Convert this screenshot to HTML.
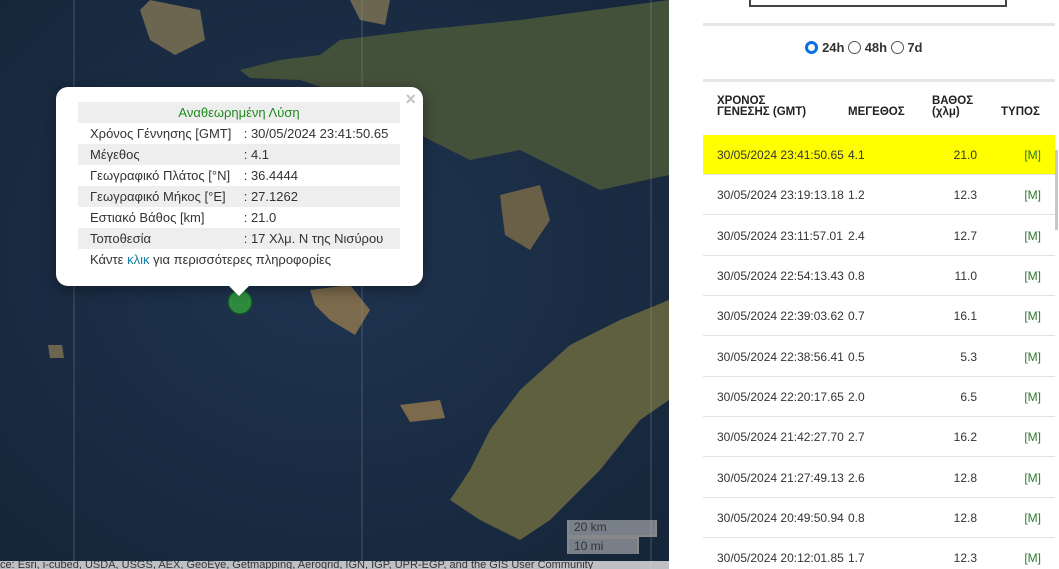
<!DOCTYPE html>
<html><head><meta charset="utf-8"><style>
*{margin:0;padding:0;box-sizing:border-box}
html,body{width:1059px;height:569px;overflow:hidden}
body{background:#fff;font-family:"Liberation Sans","DejaVu Sans",sans-serif;position:relative}
#map{position:absolute;left:0;top:0;width:669px;height:569px;background:#1b2c40;overflow:hidden}
.popup{position:absolute;left:56px;top:87px;width:367px;height:199px;background:#fff;border-radius:12px;box-shadow:0 3px 14px rgba(0,0,0,.4)}
.popup:after{content:"";position:absolute;left:173px;bottom:-10px;border:10px solid transparent;border-top-color:#fff;border-bottom:0}
.popup table{position:absolute;left:22px;top:15px;width:322px;border-collapse:collapse;font-size:13px;color:#333}
.popup td{height:21px;padding:0 0 0 12px;white-space:nowrap}
.popup td+td{padding-left:0}
.popup tr:nth-child(odd) td{background:#eee}
.x{position:absolute;right:7px;top:2px;color:#c3c3c3;font-size:18px;font-weight:bold}
#panel{position:absolute;left:669px;top:0;width:390px;height:569px;overflow:hidden}
.hr{position:absolute;left:34px;width:352px;height:3px;background:#e6e6e6}
.rows div{position:absolute;left:34px;width:352px;height:40px;border-bottom:1px solid #e2e2e2;font-size:12px;color:#333}
.rows span{position:absolute;top:13px}
.g{color:#2b7a2b}
</style></head><body>
<div id="map">
<svg width="669" height="569" style="position:absolute;left:0;top:0">
<defs><radialGradient id="s" cx="50%" cy="45%" r="70%"><stop offset="0" stop-color="#1f3450"/><stop offset="1" stop-color="#16263a"/></radialGradient></defs>
<rect width="669" height="569" fill="url(#s)"/>
<g fill="#44513a">
<path d="M340 40 L420 30 L520 20 L669 0 L669 175 L600 190 L560 170 L520 150 L470 160 L430 140 L395 120 L360 105 L330 90 L300 80 L250 78 L240 70 L280 60 L320 55Z"/>
<path d="M669 300 L620 320 L570 345 L520 390 L490 430 L470 470 L450 500 L480 520 L520 540 L550 520 L600 470 L640 420 L669 400Z" fill="#5e6040"/>
<path d="M150 0 L200 10 L205 40 L175 55 L150 40 L140 10Z" fill="#6c6650"/>
<path d="M350 0 L390 0 L385 25 L360 20Z" fill="#6c6650"/>
<path d="M500 195 L540 185 L550 220 L530 250 L505 235Z" fill="#6a6048"/>
<path d="M310 290 L350 285 L370 310 L355 335 L330 320 L315 305Z" fill="#7c6a4c"/>
<path d="M400 405 L440 400 L445 418 L410 422Z" fill="#7c6a4c"/>
<path d="M48 345 L62 345 L64 358 L50 358Z" fill="#6c6650"/>
</g>
<line x1="74" y1="0" x2="74" y2="569" stroke="#9aa3ad" stroke-opacity=".35"/>
<line x1="362" y1="0" x2="362" y2="569" stroke="#9aa3ad" stroke-opacity=".35"/>
<line x1="651" y1="0" x2="651" y2="569" stroke="#9aa3ad" stroke-opacity=".35"/>
<circle cx="240" cy="302" r="12" fill="#2e8b3e" stroke="#16502a" stroke-width="1.5"/>
</svg>
<div style="position:absolute;left:567px;top:520px;width:90px;height:17px;background:rgba(200,200,200,.55);border:2px solid #888;border-top:0;font-size:12px;color:#333;padding-left:5px">20 km</div>
<div style="position:absolute;left:567px;top:537px;width:72px;height:17px;background:rgba(200,200,200,.55);border:2px solid #888;border-bottom:0;font-size:12px;color:#333;padding-left:5px">10 mi</div>
<div style="position:absolute;left:0;top:561px;width:669px;height:8px;background:rgba(220,220,220,.85);font-size:11px;line-height:8px;color:#333;white-space:nowrap;overflow:hidden">ce: Esri, i-cubed, USDA, USGS, AEX, GeoEye, Getmapping, Aerogrid, IGN, IGP, UPR-EGP, and the GIS User Community</div>
<div class="popup"><span class="x">×</span>
<table>
<tr><td colspan="2" style="text-align:center;color:#1f8a1f;padding:0">Αναθεωρημένη Λύση</td></tr>
<tr><td style="background:#fff">Χρόνος Γέννησης [GMT]</td><td style="background:#fff">: 30/05/2024 23:41:50.65</td></tr>
<tr><td>Μέγεθος</td><td>: 4.1</td></tr>
<tr><td style="background:#fff">Γεωγραφικό Πλάτος [°N]</td><td style="background:#fff">: 36.4444</td></tr>
<tr><td>Γεωγραφικό Μήκος [°E]</td><td>: 27.1262</td></tr>
<tr><td style="background:#fff">Εστιακό Βάθος [km]</td><td style="background:#fff">: 21.0</td></tr>
<tr><td>Τοποθεσία</td><td>: 17 Χλμ. Ν της Νισύρου</td></tr>
<tr><td colspan="2" style="background:#fff">Κάντε <span style="color:#1a7fa8">κλικ</span> για περισσότερες πληροφορίες</td></tr>
</table></div>
</div>
<div id="panel">
<div style="position:absolute;left:80px;top:-2px;width:258px;height:9px;border:2px solid #444;border-top:0"></div>
<div class="hr" style="top:23px"></div>
<div style="position:absolute;left:0;width:390px;top:40px;text-align:center;font-size:13px;font-weight:bold;color:#333">
<span style="display:inline-block;width:13px;height:13px;border-radius:50%;border:3px solid #0a6fe0;vertical-align:-2px"></span> 24h <span style="display:inline-block;width:13px;height:13px;border-radius:50%;border:1px solid #555;vertical-align:-2px"></span> 48h <span style="display:inline-block;width:13px;height:13px;border-radius:50%;border:1px solid #555;vertical-align:-2px"></span> 7d</div>
<div class="hr" style="top:79px"></div>
<div style="position:absolute;top:96px;left:0;font-size:11.5px;font-weight:bold;color:#222;line-height:11px">
<span style="position:absolute;left:48px;width:120px">ΧΡΟΝΟΣ<br>ΓΕΝΕΣΗΣ (GMT)</span>
<span style="position:absolute;left:179px;top:11px">ΜΕΓΕΘΟΣ</span>
<span style="position:absolute;left:263px;width:60px">ΒΑΘΟΣ<br>(χλμ)</span>
<span style="position:absolute;left:332px;top:11px">ΤΥΠΟΣ</span></div>
<div class="rows">
<div style="top:135px;background:#ffff00"><span style="left:14px">30/05/2024 23:41:50.65</span><span style="left:145px">4.1</span><span style="right:78px">21.0</span><span class="g" style="right:14px">[M]</span></div>
<div style="top:175px"><span style="left:14px">30/05/2024 23:19:13.18</span><span style="left:145px">1.2</span><span style="right:78px">12.3</span><span class="g" style="right:14px">[M]</span></div>
<div style="top:216px"><span style="left:14px">30/05/2024 23:11:57.01</span><span style="left:145px">2.4</span><span style="right:78px">12.7</span><span class="g" style="right:14px">[M]</span></div>
<div style="top:256px"><span style="left:14px">30/05/2024 22:54:13.43</span><span style="left:145px">0.8</span><span style="right:78px">11.0</span><span class="g" style="right:14px">[M]</span></div>
<div style="top:296px"><span style="left:14px">30/05/2024 22:39:03.62</span><span style="left:145px">0.7</span><span style="right:78px">16.1</span><span class="g" style="right:14px">[M]</span></div>
<div style="top:337px"><span style="left:14px">30/05/2024 22:38:56.41</span><span style="left:145px">0.5</span><span style="right:78px">5.3</span><span class="g" style="right:14px">[M]</span></div>
<div style="top:377px"><span style="left:14px">30/05/2024 22:20:17.65</span><span style="left:145px">2.0</span><span style="right:78px">6.5</span><span class="g" style="right:14px">[M]</span></div>
<div style="top:417px"><span style="left:14px">30/05/2024 21:42:27.70</span><span style="left:145px">2.7</span><span style="right:78px">16.2</span><span class="g" style="right:14px">[M]</span></div>
<div style="top:458px"><span style="left:14px">30/05/2024 21:27:49.13</span><span style="left:145px">2.6</span><span style="right:78px">12.8</span><span class="g" style="right:14px">[M]</span></div>
<div style="top:498px"><span style="left:14px">30/05/2024 20:49:50.94</span><span style="left:145px">0.8</span><span style="right:78px">12.8</span><span class="g" style="right:14px">[M]</span></div>
<div style="top:538px"><span style="left:14px">30/05/2024 20:12:01.85</span><span style="left:145px">1.7</span><span style="right:78px">12.3</span><span class="g" style="right:14px">[M]</span></div>
</div>
<div style="position:absolute;left:386px;top:150px;width:3px;height:80px;background:#c8c8c8"></div>
</div>
</body></html>
